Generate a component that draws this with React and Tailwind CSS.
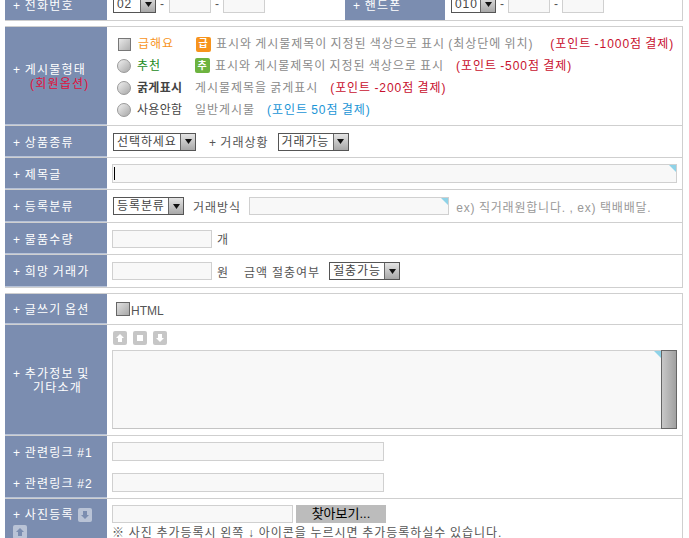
const FONT = "font-['Liberation_Sans','Noto_Sans_CJK_KR',sans-serif]";

function Corner({ size = 7 }) {
  return (
    <svg className="absolute top-0 right-0" width={size} height={size} viewBox="0 0 7 7">
      <polygon points="0,0 7,0 7,7" fill="#8fd3e8" />
    </svg>
  );
}

function Input({ className = "", corner = false, children }) {
  return (
    <div className={`relative shrink-0 border border-[#d0d0d0] bg-[#f8f8f8] ${className}`}>
      {corner && <Corner />}
      {children}
    </div>
  );
}

function Select({ label, width }) {
  return (
    <div className="flex h-[18px] shrink-0 items-stretch border border-[#555] bg-white" style={{ width }}>
      <span className="flex-1 overflow-hidden pl-[3px] text-[12px] leading-[16px] tracking-[0.9px] whitespace-nowrap text-[#444]">{label}</span>
      <span className="flex w-[15px] items-center justify-center border-l border-[#666] bg-gradient-to-b from-[#e4e4e4] to-[#a8a8a8]">
        <svg width="7" height="5" viewBox="0 0 7 5"><polygon points="0,0 7,0 3.5,5" fill="#111" /></svg>
      </span>
    </div>
  );
}

function Label({ children, className = "" }) {
  return (
    <div className={`flex w-[102px] shrink-0 items-center bg-[#7b8db0] pt-[3px] pl-[8px] text-[12px] leading-[14px] tracking-[1.2px] [word-spacing:-1px] text-white ${className}`}>
      {children}
    </div>
  );
}

function Row({ label, h, children, last = false, labelClass = "", bodyClass = "" }) {
  return (
    <div className={`flex border-[#cfcfcf] ${last ? "" : "border-b"}`} style={{ height: h }}>
      <Label className={`border-b border-[#b6c2d8] ${labelClass}`}>{label}</Label>
      <div className={`flex min-w-0 flex-1 items-center pl-[5px] text-[12px] text-[#555] ${bodyClass}`}>{children}</div>
    </div>
  );
}

function Txt({ className = "", children }) {
  return <span className={`pt-[3px] whitespace-nowrap ${className}`}>{children}</span>;
}

function Radio() {
  return <span className="mr-[6px] ml-[10px] h-[14px] w-[14px] shrink-0 rounded-full border border-[#999] bg-gradient-to-br from-[#f0f0f0] to-[#a8a8a8]" />;
}

function Badge({ color, children }) {
  return (
    <span className="mr-[5px] flex h-[15px] w-[15px] shrink-0 items-center justify-center rounded-[2px] text-[10px] leading-none font-bold text-white" style={{ background: color }}>
      {children}
    </span>
  );
}

function Tiny({ d }) {
  return (
    <span className="flex h-[14px] w-[14px] items-center justify-center rounded-[2px] bg-[#c6c6c6]">
      <svg width="10" height="10" viewBox="0 0 10 10"><path d={d} fill="#fff" /></svg>
    </span>
  );
}

const UP = "M5 1 L9 5 L7 5 L7 9 L3 9 L3 5 L1 5 Z";
const DOWN = "M5 9 L9 5 L7 5 L7 1 L3 1 L3 5 L1 5 Z";
const STOP = "M2 2 H8 V8 H2 Z";

export default function App() {
  return (
    <div className={`h-[538px] w-[689px] overflow-hidden bg-white ${FONT}`}>
      <div className="mr-[6px] ml-[5px] -mt-[12px]">
        {/* phone row */}
        <div className="flex h-[33px] border-r border-b border-[#cfcfcf]">
          <Label>+ 전화번호</Label>
          <div className="flex w-[238px] items-center pl-[6px] text-[12px] text-[#555]">
            <Select label="02" width={43} />
            <span className="mx-[4px] w-[5px]">-</span>
            <Input className="h-[18px] w-[42px]" />
            <span className="mx-[4px] w-[4px]">-</span>
            <Input className="h-[18px] w-[42px]" />
          </div>
          <Label className="!w-[100px]">+ 핸드폰</Label>
          <div className="flex flex-1 items-center pl-[6px] text-[12px] text-[#555]">
            <Select label="010" width={45} />
            <span className="mx-[4px] w-[4px]">-</span>
            <Input className="h-[18px] w-[42px]" />
            <span className="mx-[4px] w-[4px]">-</span>
            <Input className="h-[18px] w-[42px]" />
          </div>
        </div>

        {/* main table */}
        <div className="mt-[5px] border-t border-r border-[#cfcfcf]">
          <Row
            h={99}
            bodyClass="!block !pl-0"
            label={
              <div>
                <div>+ 게시물형태</div>
                <div className="pl-[17px] text-[#e0103a]">(회원옵션)</div>
              </div>
            }
          >
            <div className="flex h-full flex-col justify-center pt-[2px] tracking-[0.95px] [word-spacing:-1px]">
              <div className="flex h-[22px] items-center whitespace-nowrap">
                <span className="mr-[7px] ml-[11px] h-[13px] w-[13px] shrink-0 border border-[#777] bg-gradient-to-br from-[#e8e8e8] to-[#b0b0b0]" />
                <span className="w-[58px] text-[#f7941d]">급해요</span>
                <Badge color="#f7941d">급</Badge>
                <span className="text-[#8a8a8a]">표시와 게시물제목이 지정된 색상으로 표시 (최상단에 위치)</span>
                <span className="ml-[17px] text-[#c8102e]">(포인트 -1000점 결제)</span>
              </div>
              <div className="flex h-[21px] items-center whitespace-nowrap">
                <Radio />
                <span className="w-[58px] text-[#1a8a1a]">추천</span>
                <Badge color="#6db33f">추</Badge>
                <span className="text-[#8a8a8a]">표시와 게시물제목이 지정된 색상으로 표시</span>
                <span className="ml-[12px] text-[#c8102e]">(포인트 -500점 결제)</span>
              </div>
              <div className="flex h-[23px] items-center whitespace-nowrap">
                <Radio />
                <span className="w-[58px] font-bold tracking-[0.3px] text-[#444]">굵게표시</span>
                <span className="text-[#8a8a8a]">게시물제목을 굵게표시</span>
                <span className="ml-[12px] text-[#c8102e]">(포인트 -200점 결제)</span>
              </div>
              <div className="flex h-[22px] items-center whitespace-nowrap">
                <Radio />
                <span className="w-[58px] tracking-[0.3px] text-[#444]">사용안함</span>
                <span className="text-[#8a8a8a]">일반게시물</span>
                <span className="ml-[12px] text-[#1b95d6]">(포인트 50점 결제)</span>
              </div>
            </div>
          </Row>
          <Row h={32} label="+ 상품종류" bodyClass="!pl-[6px]">
            <Select label="선택하세요" width={83} />
            <Txt className="mr-[9px] ml-[13px] tracking-[1px] [word-spacing:-1px]">+ 거래상황</Txt>
            <Select label="거래가능" width={71} />
          </Row>
          <Row h={32} label="+ 제목글">
            <Input className="flex h-[19px] w-[565px] items-center pl-[1px]" corner>
              <span className="h-[13px] w-[1px] bg-black" />
            </Input>
          </Row>
          <Row h={33} label="+ 등록분류" bodyClass="!pl-[6px]">
            <Select label="등록분류" width={71} />
            <Txt className="mr-[8px] ml-[9px] tracking-[1px]">거래방식</Txt>
            <Input className="h-[18px] w-[200px]" corner />
            <Txt className="ml-[7px] tracking-[0.8px] [word-spacing:-0.5px] text-[#999]">ex) 직거래원합니다. , ex) 택배배달.</Txt>
          </Row>
          <Row h={32} label="+ 물품수량">
            <Input className="h-[18px] w-[100px]" />
            <Txt className="ml-[5px]">개</Txt>
          </Row>
          <Row h={33} label="+ 희망 거래가">
            <Input className="h-[18px] w-[100px]" />
            <Txt className="ml-[5px]">원</Txt>
            <Txt className="mr-[9px] ml-[16px] tracking-[1px] [word-spacing:-0.5px]">금액 절충여부</Txt>
            <Select label="절충가능" width={71} />
          </Row>
        </div>

        {/* editor table */}
        <div className="mt-[5px] border-t border-r border-[#cfcfcf]">
          <Row h={31} label="+ 글쓰기 옵션" bodyClass="!pl-[9px]">
            <span className="h-[14px] w-[14px] border border-[#666] bg-gradient-to-br from-[#e0e0e0] to-[#a8a8a8]" />
            <Txt className="ml-[1px] text-[#555]">HTML</Txt>
          </Row>
          <Row
            h={111}
            bodyClass="!block"
            label={
              <div>
                <div>+ 추가정보 및</div>
                <div className="pl-[20px]">기타소개</div>
              </div>
            }
          >
            <div className="flex h-[20px] items-end gap-[6px] pl-[1px]">
              <Tiny d={UP} />
              <Tiny d={STOP} />
              <Tiny d={DOWN} />
            </div>
            <div className="mt-[5px] flex h-[79px] w-[565px]">
              <Input className="h-full flex-1 border-r-0 border-b-[#c4c4c4]" corner />
              <div className="w-[16px] border border-[#666] bg-gradient-to-r from-[#c8c8c8] to-[#a0a0a0]" />
            </div>
          </Row>
          <div className="flex h-[63px] border-b border-[#cfcfcf]">
            <Label className="!block border-b border-[#b6c2d8] !pt-[1px]">
              <div className="flex h-[31px] items-center">+ 관련링크 #1</div>
              <div className="flex h-[31px] items-center">+ 관련링크 #2</div>
            </Label>
            <div className="flex flex-1 flex-col justify-center gap-[12px] pl-[5px]">
              <Input className="h-[19px] w-[272px]" />
              <Input className="h-[19px] w-[272px]" />
            </div>
          </div>
          <div className="flex h-[60px]">
            <Label className="!block !pt-[7px]">
              <div className="flex h-[18px] items-center gap-[4px]">
                + 사진등록
                <span className="flex h-[14px] w-[14px] items-center justify-center rounded-[2px] bg-[#b9c3d6]">
                  <svg width="10" height="10" viewBox="0 0 10 10"><path d={DOWN} fill="#7b8db0" /></svg>
                </span>
              </div>
              <div className="mt-[1px] flex h-[14px] w-[14px] items-center justify-center rounded-[2px] bg-[#b9c3d6]">
                <svg width="10" height="10" viewBox="0 0 10 10"><path d={UP} fill="#7b8db0" /></svg>
              </div>
            </Label>
            <div className="flex-1 pt-[6px] pl-[5px] text-[12px] text-[#555]">
              <div className="flex items-center gap-[3px]">
                <Input className="h-[18px] w-[181px]" />
                <span className="flex h-[18px] w-[90px] items-center justify-center bg-[#bcbcbc] text-[13px] text-black">찾아보기...</span>
              </div>
              <div className="mt-[2px] text-[12px] leading-[16px] tracking-[0.95px] [word-spacing:-0.5px] whitespace-nowrap">※ 사진 추가등록시 왼쪽 ↓ 아이콘을 누르시면 추가등록하실수 있습니다.</div>
            </div>
          </div>
        </div>
      </div>
    </div>
  );
}
